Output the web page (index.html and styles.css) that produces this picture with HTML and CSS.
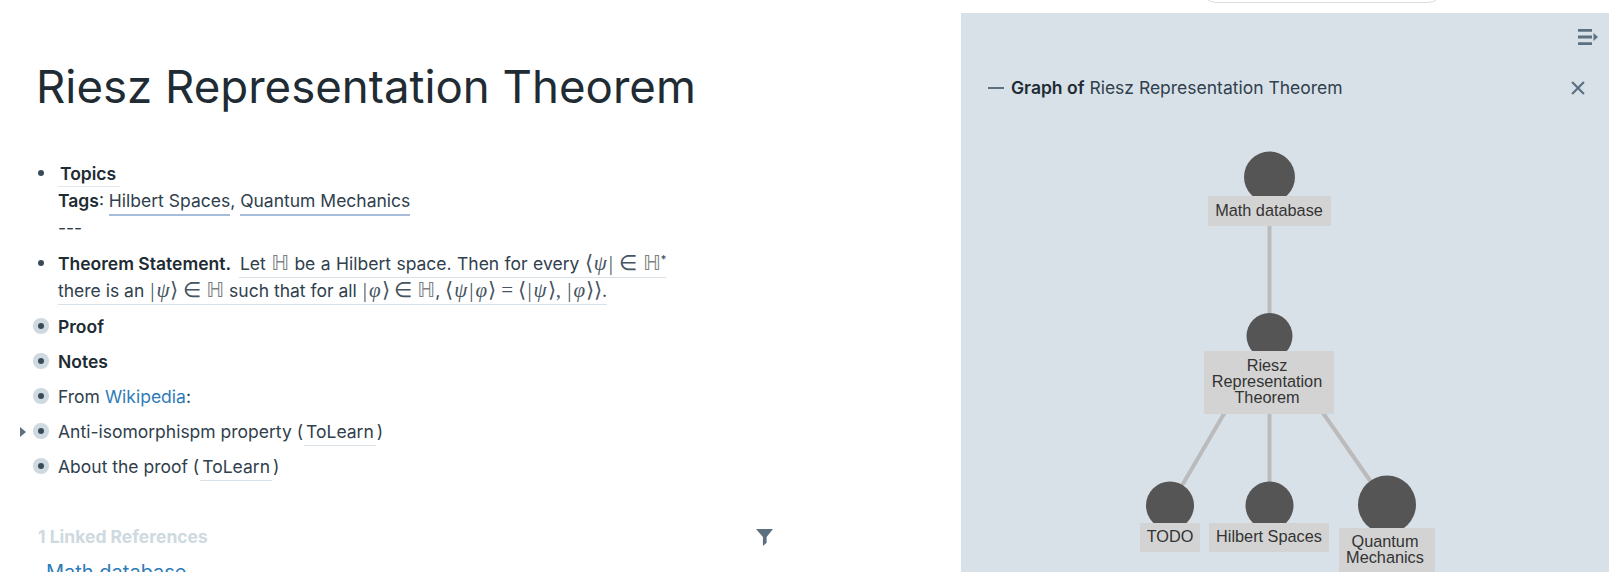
FILE: index.html
```html
<!DOCTYPE html>
<html lang="en">
<head>
    <meta charset="UTF-8">
    <meta name="viewport" content="width=device-width, initial-scale=1.0">
    <title>Riesz Representation Theorem</title>
    <link rel="stylesheet" href="styles.css">
</head>
<body>
    <div class="search-pill"></div>

    <main class="page">
        <h1 class="page-title">Riesz Representation Theorem</h1>

        <div class="outline">
            <div class="block">
                <span class="dot"></span>
                <div class="block-text">
                    <div><strong class="topics">Topics</strong></div>
                    <div><strong>Tags</strong>: <a class="tag">Hilbert Spaces</a>, <a class="tag">Quantum Mechanics</a></div>
                    <div>---</div>
                </div>
            </div>
            <div class="block">
                <span class="dot"></span>
                <div class="block-text">
                    <strong>Theorem Statement.</strong>
                    <span class="ref ref-first">Let <span class="bb">ℍ</span> be a Hilbert space. Then for every <span class="math">⟨<i>ψ</i><span class="bar">|</span></span> <span class="math rel">∈</span> <span class="bb">ℍ</span><sup>*</sup></span><br>
                    <span class="ref">there is an <span class="math"><span class="bar">|</span><i>ψ</i>⟩</span> <span class="math rel">∈</span> <span class="bb">ℍ</span> such that for all <span class="math"><span class="bar">|</span><i>φ</i>⟩</span> <span class="math rel">∈</span> <span class="bb">ℍ</span>, <span class="math">⟨<i>ψ</i><span class="bar">|</span><i>φ</i>⟩ <span class="rel">=</span> ⟨<span class="bar">|</span><i>ψ</i>⟩, <span class="bar">|</span><i>φ</i>⟩⟩</span>.</span>
                </div>
            </div>
            <div class="block collapsed"><span class="dot"></span><strong>Proof</strong></div>
            <div class="block collapsed"><span class="dot"></span><strong>Notes</strong></div>
            <div class="block collapsed"><span class="dot"></span><span>From <a class="link">Wikipedia</a>:</span></div>
            <div class="block collapsed">
                <span class="caret"></span>
                <span class="dot"></span>
                <span>Anti-isomorphispm property (<a class="page-ref">ToLearn</a>)</span>
            </div>
            <div class="block collapsed"><span class="dot"></span><span>About the proof (<a class="page-ref">ToLearn</a>)</span></div>
        </div>

        <div class="refs-head">
            <strong>1 Linked References</strong>
            <svg class="filter-icon" width="17" height="17" viewBox="0 0 16 16"><path d="M0 0h16L10 7.500V13l-3.500 3V7.500z"/></svg>
        </div>
        <a class="ref-page">Math database</a>
    </main>

    <aside class="sidebar">
        <div class="side-top">
            <svg class="menu-icon" width="20" height="16" viewBox="0 0 20 16">
                <path d="M0 0h14v2.800H0zM0 6.600h14v2.800H0zM0 13.200h14V16H0z"/>
                <path d="M15.500 4 20 8l-4.500 4z"/>
            </svg>
        </div>
        <div class="side-head">
            <span class="dash"></span>
            <span class="side-title"><strong>Graph of</strong> Riesz Representation Theorem</span>
            <svg class="close-icon" width="14" height="14" viewBox="0 0 13 13"><path d="M1 1l11 11M12 1 1 12"/></svg>
        </div>
        <svg class="graph" viewBox="961 120 648 452">
            <g class="edges">
                <line x1="1269.500" y1="177" x2="1269.500" y2="336"/>
                <line x1="1269.500" y1="336" x2="1170" y2="506"/>
                <line x1="1269.500" y1="336" x2="1269.500" y2="506"/>
                <line x1="1269.500" y1="336" x2="1387" y2="505"/>
            </g>
            <g class="nodes">
                <circle cx="1269.500" cy="177" r="25.500"/>
                <circle cx="1269.500" cy="336" r="23"/>
                <circle cx="1170" cy="505.500" r="24"/>
                <circle cx="1269.500" cy="505.500" r="24"/>
                <circle cx="1387" cy="504.500" r="29"/>
            </g>
            <g class="labels">
                <rect x="1208" y="196" width="123" height="30" rx="1"/>
                <text x="1269" y="215.500">Math database</text>
                <rect x="1204" y="351" width="130" height="63" rx="1"/>
                <text x="1267" y="370.500">Riesz</text>
                <text x="1267" y="386.500">Representation</text>
                <text x="1267" y="402.500">Theorem</text>
                <rect x="1140" y="523" width="60" height="29" rx="1"/>
                <text x="1170" y="541.500">TODO</text>
                <rect x="1209" y="523" width="120" height="29" rx="1"/>
                <text x="1269" y="541.500">Hilbert Spaces</text>
                <rect x="1339" y="528" width="96" height="50" rx="1"/>
                <text x="1385" y="547">Quantum</text>
                <text x="1385" y="563">Mechanics</text>
            </g>
        </svg>
    </aside>
</body>
</html>
```

FILE: styles.css
```css
* {
    box-sizing: border-box;
}

html, body {
    height: 572px;
    overflow: hidden;
}

body {
    margin: 0;
    display: flex;
    background: #fff;
    color: #202b33;
    font-family: Inter, "Noto Sans", sans-serif;
    font-size: 17.500px;
    line-height: 27px;
}

strong {
    font-weight: 600;
}

/* cut-off search box at the very top */
.search-pill {
    position: absolute;
    top: -30px;
    left: 1200px;
    width: 244px;
    height: 33px;
    border: 1px solid #ddd;
    border-radius: 16px;
    background: #fff;
}

.page {
    width: 961px;
    flex: none;
    padding: 0 0 0 36px;
    color: #30404d;
}

.page-title {
    margin: 59px 0 0;
    font-size: 45.600px;
    font-weight: 400;
    line-height: 56px;
    color: #202b33;
}

.outline {
    margin-top: 45px;
    width: 680px;
}

.outline strong {
    color: #202b33;
}

.block {
    position: relative;
    display: flex;
    padding-left: 22px;
    margin-bottom: 9px;
}

.block .dot {
    position: absolute;
    left: 2px;
    top: 10px;
    width: 6px;
    height: 6px;
    border-radius: 50%;
    background: #394b59;
}

.block.collapsed {
    margin-bottom: 8px;
}

.collapsed .dot {
    box-shadow: 0 0 0 5px #ced9e0;
}

.caret {
    position: absolute;
    left: -16px;
    top: 9px;
    border-left: 6px solid #5c7080;
    border-top: 5px solid transparent;
    border-bottom: 5px solid transparent;
}

.topics {
    display: inline-block;
    padding: 0 1px 0 2px;
    line-height: 25px;
    min-width: 62px;
    border-bottom: 1px solid #e1e8ed;
}

.tag {
    border-bottom: 2px solid #a7bcd9;
    padding-bottom: 3px;
}

.ref {
    border-bottom: 1px solid #d8e1e8;
    padding-bottom: 3px;
}

.ref-first {
    margin-left: 3px;
    padding-left: 1px;
    word-spacing: 0.500px;
}

.page-ref {
    margin: 0 1px;
    padding: 0 2px 3px;
    border-bottom: 1px solid #d8e1e8;
}

.link, .ref-page {
    color: #2e7bb8;
}

.math {
    font-family: "Liberation Serif", serif;
    font-size: 21px;
    line-height: 1;
    color: #46545f;
}

.math i {
    padding: 0 1px;
}

.bar {
    margin: 0 1px;
}

.rel {
    margin: 0;
}

.bb {
    font-family: "DejaVu Sans", sans-serif;
    font-size: 21px;
    line-height: 1;
    color: #7d7f82;
}

sup {
    font-size: 11px;
    line-height: 0;
}

.refs-head {
    display: flex;
    justify-content: space-between;
    align-items: center;
    width: 735px;
    margin: 43px 0 0 2px;
    color: #ced9e0;
}

.refs-head strong {
    font-weight: 700;
}

.filter-icon {
    fill: #5c7080;
    position: relative;
    top: 1px;
}

.ref-page {
    display: block;
    margin: 9px 0 0 10px;
    font-size: 20px;
}

.sidebar {
    flex: 1;
    margin-top: 13px;
    background: #d8e1e8;
    display: flex;
    flex-direction: column;
    color: #30404d;
}

.side-top {
    display: flex;
    justify-content: flex-end;
    padding: 16px 11px 0 0;
}

.menu-icon {
    fill: #5c7080;
}

.side-head {
    display: flex;
    align-items: center;
    margin-top: 29px;
    padding: 0 24px 0 27px;
}

.dash {
    width: 16px;
    height: 2px;
    background: #5c7080;
    margin-right: 7px;
}

.side-title {
    flex: 1;
}

.side-title strong {
    color: #202b33;
}

.close-icon {
    fill: none;
    stroke: #5c7080;
    stroke-width: 2;
}

.graph {
    position: absolute;
    left: 961px;
    top: 120px;
    width: 648px;
    height: 452px;
}

.edges line {
    stroke: #bbb;
    stroke-width: 4;
}

.nodes circle {
    fill: #555;
}

.labels rect {
    fill: #d3d3d3;
}

.labels text {
    fill: #333;
    font-family: "Liberation Sans", Arial, sans-serif;
    font-size: 16.300px;
    text-anchor: middle;
}
```
